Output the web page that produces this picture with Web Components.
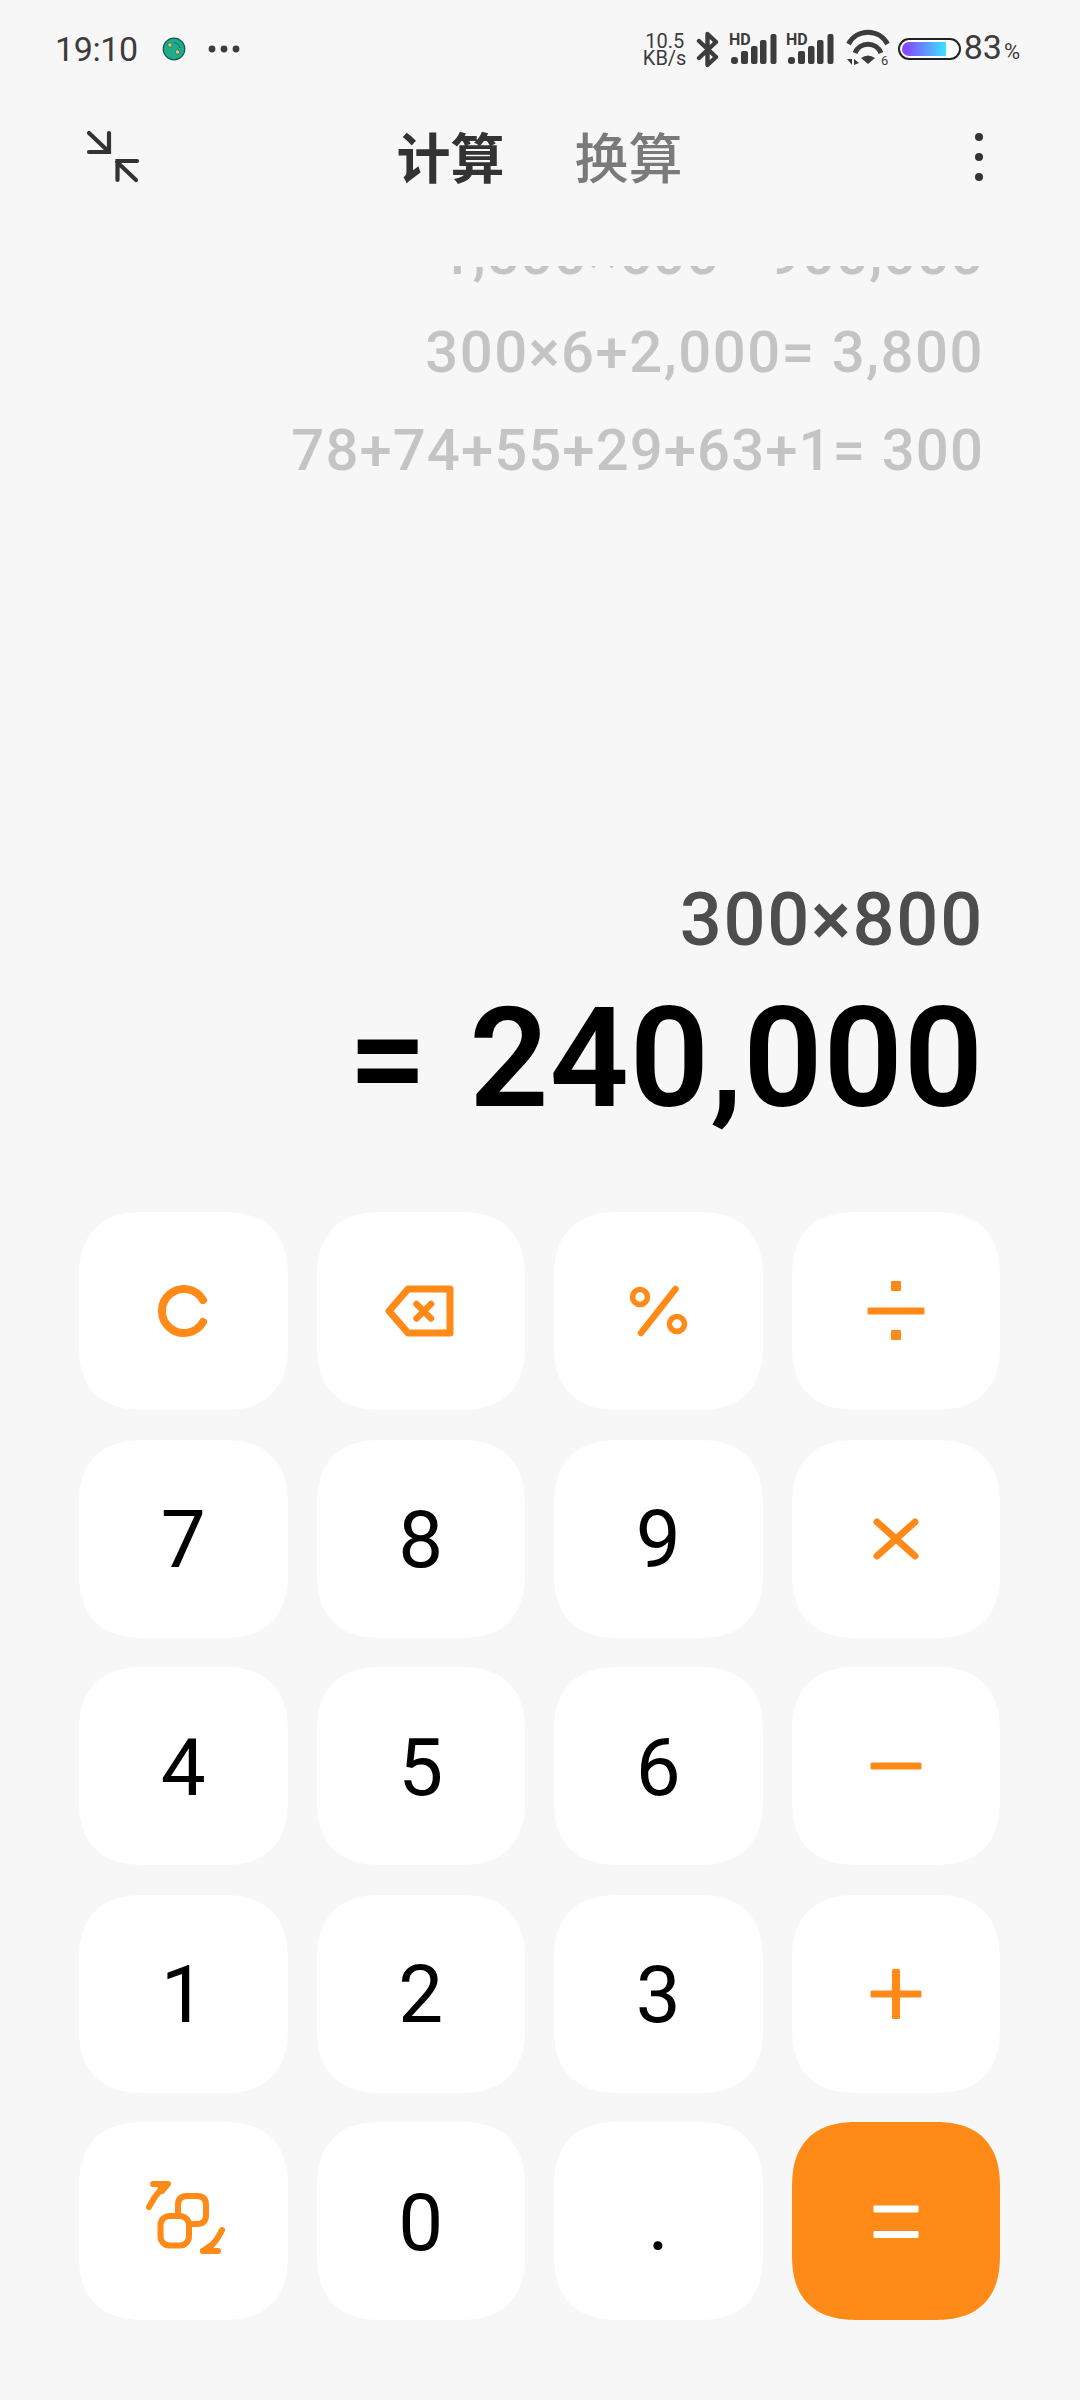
<!DOCTYPE html>
<html lang="zh">
<head>
<meta charset="utf-8">
<title>计算器</title>
<style>
html,body{margin:0;padding:0;background:#f7f7f7;}
body{font-family:Roboto,"Noto Sans CJK SC",sans-serif;width:1080px;height:2400px;overflow:hidden;}
</style>
</head>
<body>
<calc-app>
  <status-bar></status-bar>
  <calc-header></calc-header>
  <calc-history>
    <div style="letter-spacing:.7px">1,500×600= 900,000</div>
    <div style="letter-spacing:1.5px">300×6+2,000= 3,800</div>
    <div>78+74+55+29+63+1= 300</div>
  </calc-history>
  <calc-display expr="300×800" result="= 240,000"></calc-display>
  <calc-keypad>
    <calc-key><svg viewBox="-50 -50 100 100" fill="none" stroke="#ff8a17" stroke-width="8" stroke-linecap="round"><path d="M20 -11 A22 22 0 1 0 20 11"/></svg></calc-key>
    <calc-key><svg viewBox="-50 -50 100 100" fill="none" stroke="#ff8a17" stroke-width="7" stroke-linejoin="round" stroke-linecap="round"><path d="M29 -22 H-13 L-32 0 L-13 22 H29 Z"/><path d="M-4.500 -7 L10 7.500 M10 -7 L-4.500 7.500" stroke-width="6.500"/></svg></calc-key>
    <calc-key><svg viewBox="-50 -50 100 100" fill="none" stroke="#ff8a17" stroke-width="5.500"><circle cx="-18" cy="-14" r="7.500"/><circle cx="19" cy="13" r="7.500"/><path d="M17.500 -22 L-17 22" stroke-width="6.500" stroke-linecap="round"/></svg></calc-key>
    <calc-key><svg viewBox="-50 -50 100 100" fill="#ff8a17"><rect x="-28.500" y="-3.500" width="57" height="7" rx="1.500"/><rect x="-5" y="-30" width="10" height="10" rx="1"/><rect x="-5" y="19" width="10" height="10" rx="1"/></svg></calc-key>

    <calc-key>7</calc-key><calc-key>8</calc-key><calc-key>9</calc-key>
    <calc-key><svg viewBox="-50 -50 100 100" fill="none" stroke="#ff8a17" stroke-width="7" stroke-linecap="round"><path d="M-19 -17 L19 17 M19 -17 L-19 17"/></svg></calc-key>

    <calc-key>4</calc-key><calc-key>5</calc-key><calc-key>6</calc-key>
    <calc-key><svg viewBox="-50 -50 100 100" fill="#ff8a17"><rect x="-25.500" y="-3.500" width="51" height="7" rx="1.500"/></svg></calc-key>

    <calc-key>1</calc-key><calc-key>2</calc-key><calc-key>3</calc-key>
    <calc-key><svg viewBox="-50 -50 100 100" fill="#ff8a17"><rect x="-25.500" y="-3.500" width="51" height="7" rx="1.500"/><rect x="-4" y="-25" width="8" height="50" rx="1.500"/></svg></calc-key>

    <calc-key><svg viewBox="-50 -50 100 100" fill="none" stroke="#ff8a17" stroke-width="6" stroke-linecap="round" stroke-linejoin="round"><rect x="-22.500" y="-5" width="28.500" height="29.500" rx="9"/><path d="M-5 -6 V-16 Q-5 -25 4 -25 H14 Q23 -25 23 -16 V-6 Q23 3 14 3 H9"/><path d="M-34 -14 Q-29 -24 -21 -33"/><path d="M-30 -37 H-15 L-21 -30" fill="#ff8a17"/><path d="M39 9 Q34 20 25 28"/><path d="M20 30 H35 " /><path d="M20 30 L27 25" /></svg></calc-key>
    <calc-key>0</calc-key><calc-key>.</calc-key>
    <calc-key accent><svg viewBox="-50 -50 100 100" fill="#fff"><rect x="-22.500" y="-15.500" width="45" height="7" rx="1"/><rect x="-22.500" y="10" width="45" height="7" rx="1"/></svg></calc-key>
  </calc-keypad>
</calc-app>
<script>
function def(name, css, html){
  customElements.define(name, class extends HTMLElement{
    constructor(){
      super();
      const r=this.attachShadow({mode:'open'});
      r.innerHTML='<style>'+css+'</style>'+(typeof html==='function'?html(this):html);
    }
  });
}
def('calc-app', ':host{display:flex;flex-direction:column;width:1080px;height:2400px;background:#f7f7f7;color:#000;}', '<slot></slot>');

def('status-bar', `
:host{display:flex;align-items:center;justify-content:space-between;height:98px;padding:0 60px 0 55px;color:#3c3c3c;font-family:Roboto,sans-serif;}
.l,.r{display:flex;align-items:center;}
.time{font-size:34px;line-height:40px;font-weight:450;letter-spacing:-.4px;width:107px;}
.app{display:block;width:24px;height:24px;margin-right:20px;}
.dots{display:block;width:36px;height:8px;}
.net{display:flex;flex-direction:column;align-items:center;font-size:20px;line-height:17.500px;width:42px;margin-right:10px;padding-top:2px;}
.r svg{display:block;flex:none;}
.hd{margin-top:-4px;}
.pct{font-size:34px;line-height:40px;margin-left:3px;}
.pct small{font-size:22px;margin-left:2px;}
`, `
<div class="l"><span class="time">19:10</span>
<svg class="app" viewBox="0 0 24 24"><circle cx="12" cy="12" r="10.800" fill="#1fac8c" stroke="#17584d" stroke-width="1.200"/><circle cx="8" cy="8" r="2.200" fill="#d9c46c" stroke="#0d5c4c" stroke-width=".6"/><circle cx="15.500" cy="15" r="2.200" fill="#d9c46c" stroke="#0d5c4c" stroke-width=".6"/><path d="M12 5.500 A7 7 0 0 1 18 11" fill="none" stroke="#0d5c4c" stroke-width=".8"/></svg>
<svg class="dots" viewBox="0 0 36 8" fill="#3c3c3c"><circle cx="6" cy="4" r="3.400"/><circle cx="18" cy="4" r="3.400"/><circle cx="30" cy="4" r="3.400"/></svg></div>
<div class="r">
<span class="net"><span>10.5</span><span>KB/s</span></span>
<svg width="23" height="37" viewBox="0 0 23 37" fill="none" stroke="#3c3c3c" stroke-width="4.400" stroke-linejoin="round" stroke-linecap="round" style="margin-right:10px"><path d="M3 10 L20 26 L11.500 34 V3 L20 11 L3 27"/></svg>
<svg class="hd" width="48" height="36" viewBox="0 -4 48 36" fill="#3c3c3c" style="margin-right:9px"><text x="0" y="12" font-family="Roboto,sans-serif" font-weight="700" font-size="16">HD</text><rect x="2" y="24" width="7" height="7" rx="3"/><rect x="12" y="18" width="7" height="13" rx="2"/><rect x="22" y="13" width="6.500" height="18" rx="2"/><rect x="31" y="7" width="6.500" height="24" rx="2"/><rect x="41.500" y="1" width="6" height="30" rx="2"/></svg>
<svg class="hd" width="48" height="36" viewBox="0 -4 48 36" fill="#3c3c3c" style="margin-right:12px"><text x="0" y="12" font-family="Roboto,sans-serif" font-weight="700" font-size="16">HD</text><rect x="2" y="24" width="7" height="7" rx="3"/><rect x="12" y="18" width="7" height="13" rx="2"/><rect x="22" y="13" width="6.500" height="18" rx="2"/><rect x="31" y="7" width="6.500" height="24" rx="2"/><rect x="41.500" y="1" width="6" height="30" rx="2"/></svg>
<svg width="44" height="40" viewBox="0 0 44 40" fill="none" stroke="#3c3c3c" stroke-width="5" style="margin-right:8px"><path d="M2.500 15 A22 22 0 0 1 41.500 15"/><path d="M9 24 A14 14 0 0 1 35 24"/><path d="M15 29 Q22 24 29 29 L22 35 Z" fill="#3c3c3c" stroke="none"/><path d="M1 30 L6 30 V36 Z M8 36 V30 L13 34 Z" fill="#3c3c3c" stroke="none"/><text x="35" y="36" fill="#3c3c3c" stroke="none" font-family="Roboto,sans-serif" font-size="13">6</text></svg>
<svg width="63" height="22" viewBox="0 0 63 22"><defs><linearGradient id="g" x1="0" x2="1"><stop offset="0" stop-color="#8a3cfb"/><stop offset="1" stop-color="#3be3ff"/></linearGradient></defs><rect x="1" y="1" width="61" height="20" rx="10" fill="#fff" stroke="#222" stroke-width="2"/><path d="M11 4 H48 V18 H11 A7 7 0 0 1 11 4 Z" fill="url(#g)"/></svg>
<span class="pct">83<small>%</small></span>
</div>`);

def('calc-header', `
:host{display:flex;align-items:center;justify-content:space-between;height:118px;margin-bottom:50px;padding:0 97px 0 86px;color:#333;font-family:"Noto Sans CJK SC",sans-serif;}
svg{display:block;flex:none;}
.tabs{display:flex;gap:70px;font-size:54px;line-height:70px;margin-right:36px;margin-top:-2px;}
.on{color:#333;font-weight:700;}
.off{color:#7a7a7a;font-weight:500;}
`, `
<svg width="54" height="54" viewBox="0 0 54 54" fill="none" stroke="#333" stroke-width="4.200" stroke-linecap="round"><path d="M3 3 L22 21 M23 3 V22 H3"/><path d="M50 50 L31 32 M51 31 H31.500 V50"/></svg>
<div class="tabs"><span class="on">计算</span><span class="off">换算</span></div>
<svg width="8" height="48" viewBox="0 0 8 48" fill="#333"><circle cx="4" cy="4" r="4"/><circle cx="4" cy="24" r="4"/><circle cx="4" cy="44" r="4"/></svg>
`);

def('calc-history', `
:host{display:flex;flex-direction:column;justify-content:flex-end;align-items:flex-end;height:233px;overflow:hidden;padding-right:96px;color:#c4c4c4;font-family:Roboto,sans-serif;font-weight:500;font-size:58px;line-height:98px;letter-spacing:1.1px;white-space:nowrap;}
::slotted(div){flex:none;}
`, '<slot></slot>');

def('calc-display', `
:host{display:flex;flex-direction:column;align-items:flex-end;padding-right:96px;margin-top:376px;font-family:Roboto,sans-serif;white-space:nowrap;}
.e{font-size:74px;line-height:90px;font-weight:500;letter-spacing:1.8px;color:#4d4d4d;}
.r{font-size:139px;line-height:170px;font-weight:600;letter-spacing:.8px;word-spacing:6px;color:#000;margin-top:9px;}
`, h=>`<div class="e">${h.getAttribute('expr')}</div><div class="r">${h.getAttribute('result')}</div>`);

def('calc-keypad', `
:host{display:grid;grid-template-columns:repeat(4,208.500px);grid-auto-rows:198px;column-gap:29px;row-gap:29.500px;padding-left:79px;margin-top:68px;}
`, '<slot></slot>');

def('calc-key', `
:host{display:flex;align-items:center;justify-content:center;background:#fff;border-radius:66px;corner-shape:superellipse(1.3);font-family:Roboto,sans-serif;font-size:80px;line-height:86px;color:#000;}
:host([accent]){background:#ff8a17;}
::slotted(svg){display:block;width:100px;height:100px;margin-top:-3px;}
.t{display:block;padding-top:3px;}
`, '<span class="t"><slot></slot></span>');
</script>
</body>
</html>
